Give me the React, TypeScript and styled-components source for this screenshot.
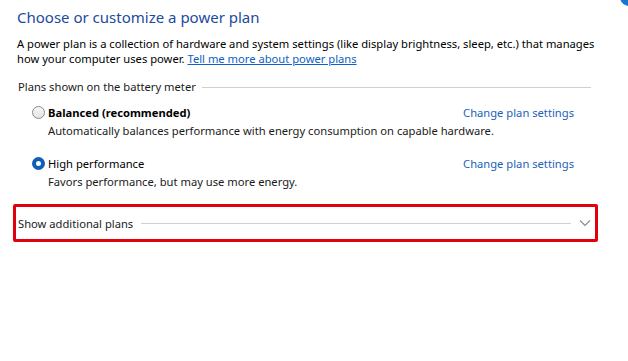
import React from 'react';
import styled, { createGlobalStyle } from 'styled-components';

const GlobalStyle = createGlobalStyle`
  html, body {
    margin: 0;
    padding: 0;
    background: #ffffff;
  }
  body {
    font-family: 'Noto Sans', 'Open Sans', Arial, sans-serif;
    color: #000000;
  }
`;

const Page = styled.main`
  position: relative;
  width: 628px;
  height: 361px;
  overflow: hidden;
  padding: 6px 37px 0 17px;
  box-sizing: border-box;
`;

const Corner = styled.div`
  position: absolute;
  top: -12px;
  right: -10px;
  width: 18px;
  height: 18px;
  border-radius: 50%;
  background: #1a74d0;
`;

const Title = styled.h1`
  margin: 0;
  font-size: 15px;
  font-weight: 400;
  line-height: 22px;
  color: #1c4a9c;
`;

const Intro = styled.p`
  margin: 8px 0 0;
  font-size: 11.2px;
  line-height: 15px;
  white-space: nowrap;
`;

const Link = styled.a`
  color: #0b62c4;
  text-decoration: underline;
  cursor: pointer;
`;

const Group = styled.section`
  margin-top: 13px;
`;

const GroupHeader = styled.div`
  display: flex;
  align-items: center;
  gap: 6px;
  height: 16px;
  padding-left: 1px;
  font-size: 11.2px;
  line-height: 16px;
  color: #1a1a1a;

  &::after {
    content: '';
    flex: 1;
    height: 1px;
    background: #d0d0d0;
  }
`;

const PlanList = styled.div`
  display: flex;
  flex-direction: column;
  gap: 16px;
  padding: 9px 17px 0 15px;
`;

const Plan = styled.div`
  display: flex;
  flex-direction: column;
  gap: 3px;
`;

const PlanRow = styled.div`
  display: flex;
  align-items: center;
  height: 16px;
`;

const Radio = styled.span<{ checked?: boolean }>`
  width: 13px;
  height: 13px;
  box-sizing: border-box;
  border-radius: 50%;
  margin-right: 3px;
  flex-shrink: 0;
  border: ${({ checked }) => (checked ? '4px solid #0f5fb6' : '1px solid #8a8a8a')};
  background: ${({ checked }) =>
    checked ? '#ffffff' : 'linear-gradient(#f6f6f6, #e4e4e4)'};
`;

const PlanName = styled.span<{ bold?: boolean }>`
  flex: 1;
  font-size: 11.2px;
  font-weight: ${({ bold }) => (bold ? 700 : 400)};
`;

const SettingsLink = styled.a`
  font-size: 11.2px;
  color: #1a62b8;
  cursor: pointer;
`;

const PlanDesc = styled.div`
  padding-left: 16px;
  font-size: 11.2px;
  line-height: 16px;
  color: #1a1a1a;
`;

const Highlight = styled.div`
  margin: 14px 0 0 -4px;
  width: 585px;
  height: 38px;
  box-sizing: border-box;
  border: 3px solid #e0000e;
  border-radius: 2px;
  display: flex;
  align-items: center;
  gap: 8px;
  padding: 0 4px 0 2px;
`;

const MoreLabel = styled.span`
  font-size: 11.2px;
  color: #1a1a1a;
`;

const Rule = styled.span`
  flex: 1;
  height: 1px;
  background: #d0d0d0;
`;

const Chevron = () => (
  <svg width="12" height="8" viewBox="0 0 12 8">
    <path d="M1 1.5 L6 6.5 L11 1.5" fill="none" stroke="#8a8a8a" strokeWidth="1.1" />
  </svg>
);

const plans = [
  {
    name: 'Balanced (recommended)',
    desc: 'Automatically balances performance with energy consumption on capable hardware.',
    checked: false,
    bold: true,
  },
  {
    name: 'High performance',
    desc: 'Favors performance, but may use more energy.',
    checked: true,
    bold: false,
  },
];

const App = () => (
  <>
    <GlobalStyle />
    <Page>
      <Corner />
      <Title>Choose or customize a power plan</Title>
      <Intro>
        A power plan is a collection of hardware and system settings (like display brightness, sleep, etc.) that manages
        <br />
        how your computer uses power. <Link>Tell me more about power plans</Link>
      </Intro>
      <Group>
        <GroupHeader>Plans shown on the battery meter</GroupHeader>
        <PlanList>
          {plans.map((p) => (
            <Plan key={p.name}>
              <PlanRow>
                <Radio checked={p.checked} />
                <PlanName bold={p.bold}>{p.name}</PlanName>
                <SettingsLink>Change plan settings</SettingsLink>
              </PlanRow>
              <PlanDesc>{p.desc}</PlanDesc>
            </Plan>
          ))}
        </PlanList>
      </Group>
      <Highlight>
        <MoreLabel>Show additional plans</MoreLabel>
        <Rule />
        <Chevron />
      </Highlight>
    </Page>
  </>
);

export default App;
